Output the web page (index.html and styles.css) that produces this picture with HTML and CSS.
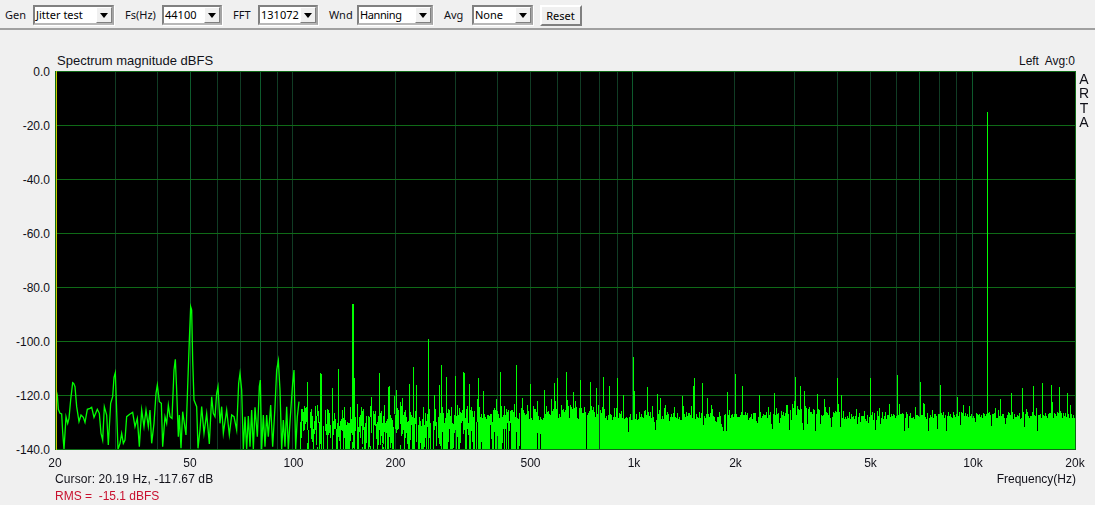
FILE: index.html
```html
<!DOCTYPE html>
<html lang="en">
<head>
<meta charset="utf-8">
<title>ARTA Spectrum</title>
<link rel="stylesheet" href="styles.css">
</head>
<body>
<header class="toolbar">
  <span class="tool-label tool-label-gen">Gen</span>
  <div class="combo combo-gen"><span class="combo-value">Jitter test</span><span class="combo-btn"><i class="arrow"></i></span></div>
  <span class="tool-label tool-label-fs">Fs(Hz)</span>
  <div class="combo combo-fs"><span class="combo-value">44100</span><span class="combo-btn"><i class="arrow"></i></span></div>
  <span class="tool-label tool-label-fft">FFT</span>
  <div class="combo combo-fft"><span class="combo-value">131072</span><span class="combo-btn"><i class="arrow"></i></span></div>
  <span class="tool-label tool-label-wnd">Wnd</span>
  <div class="combo combo-wnd"><span class="combo-value">Hanning</span><span class="combo-btn"><i class="arrow"></i></span></div>
  <span class="tool-label tool-label-avg">Avg</span>
  <div class="combo combo-avg"><span class="combo-value">None</span><span class="combo-btn"><i class="arrow"></i></span></div>
  <button class="reset" type="button">Reset</button>
</header>
<main class="chart">
  <div class="chart-head">
    <span class="chart-title">Spectrum magnitude dBFS</span>
    <span class="chart-status">Left&nbsp; Avg:0</span>
  </div>
  <div class="y-axis">
    <span class="y-tick">0.0</span>
    <span class="y-tick">-20.0</span>
    <span class="y-tick">-40.0</span>
    <span class="y-tick">-60.0</span>
    <span class="y-tick">-80.0</span>
    <span class="y-tick">-100.0</span>
    <span class="y-tick">-120.0</span>
    <span class="y-tick">-140.0</span>
  </div>
  <canvas class="plot" id="plot" width="1021" height="379"></canvas>
  <div class="brand"><span>A</span><span>R</span><span>T</span><span>A</span></div>
  <div class="x-axis">
    <span class="x-tick" style="left:0px">20</span>
    <span class="x-tick" style="left:135px">50</span>
    <span class="x-tick" style="left:238.5px">100</span>
    <span class="x-tick" style="left:340.5px">200</span>
    <span class="x-tick" style="left:475.5px">500</span>
    <span class="x-tick" style="left:579px">1k</span>
    <span class="x-tick" style="left:680.5px">2k</span>
    <span class="x-tick" style="left:815.5px">5k</span>
    <span class="x-tick" style="left:918px">10k</span>
    <span class="x-tick" style="left:1020px">20k</span>
  </div>
  <div class="readout">
    <span class="cursor">Cursor: 20.19 Hz, -117.67 dB</span>
    <span class="freq-label">Frequency(Hz)</span>
    <span class="rms">RMS =&nbsp; -15.1 dBFS</span>
  </div>
</main>
<script src="script.js"></script>
</body>
</html>
```

FILE: styles.css
```css
* { box-sizing: border-box; }
html, body { margin: 0; height: 505px; overflow: hidden; }
body {
  background: #f0f0f0;
  color: #101018;
  font-family: "Liberation Sans", Arial, sans-serif;
  font-size: 12px;
}

.toolbar {
  display: flex;
  align-items: flex-start;
  height: 30px;
  padding: 5px 0 0 5px;
  border-bottom: 2px solid #a0a0a0;
  font-family: "Noto Sans", sans-serif;
  font-size: 11px;
}
.tool-label { height: 20px; line-height: 20px; }
.tool-label-gen { width: 28px; }
.tool-label-fs { width: 37px; margin-left: 11px; }
.tool-label-fft { width: 25px; margin-left: 11px; }
.tool-label-wnd { width: 28px; margin-left: 11px; }
.tool-label-avg { width: 28px; margin-left: 11px; }

.combo {
  display: flex;
  height: 20px;
  background: #fff;
  border: 2px solid;
  border-color: #808080 #a4a4a4 #b8b8b8 #808080;
  box-shadow: 1px 1px 0 #fff;
}
.combo-gen { width: 81px; }
.combo-fs { width: 60px; }
.combo-fft { width: 60px; }
.combo-wnd { width: 76px; }
.combo-avg { width: 61px; }
.combo-value { flex: 1; padding-left: 1px; line-height: 16px; color: #000; white-space: nowrap; }
.combo-wnd .combo-value { letter-spacing: -0.4px; }
.combo-btn {
  display: flex;
  align-items: center;
  justify-content: center;
  width: 16px;
  background: #f0f0f0;
  border: 1px solid;
  border-color: #fff #808080 #808080 #fff;
}
.arrow {
  width: 0;
  height: 0;
  border-left: 4.5px solid transparent;
  border-right: 4.5px solid transparent;
  border-top: 5px solid #000;
}
.reset {
  width: 42px;
  height: 21px;
  margin-left: 7px;
  padding: 0 1px 0 0;
  background: #f0f0f0;
  border: 2px solid;
  border-color: #fff #808080 #808080 #fff;
  font: inherit;
  color: #000;
}

.chart {
  display: grid;
  grid-template-columns: 55px 1021px 19px;
  grid-template-rows: 41px 379px 21px 34px;
}
.chart-head {
  grid-column: 2;
  grid-row: 1;
  display: flex;
  justify-content: space-between;
  align-items: flex-end;
  padding: 0 1px 2px 2px;
}
.chart-title { font-size: 13px; line-height: 16px; }
.chart-status { line-height: 16px; letter-spacing: -0.05px; }

.y-axis {
  grid-column: 1;
  grid-row: 2;
  display: flex;
  flex-direction: column;
  justify-content: space-between;
  align-items: flex-end;
  padding: 1px 5px 0 0;
}
.y-tick { height: 0; line-height: 0; }

.plot { grid-column: 2; grid-row: 2; display: block; width: 1021px; height: 379px; }

.brand {
  grid-column: 3;
  grid-row: 2;
  display: flex;
  flex-direction: column;
  align-items: center;
  padding: 1px 3px 0 0;
  font-size: 14px;
  line-height: 14.4px;
}

.x-axis { grid-column: 2; grid-row: 3; position: relative; }
.x-tick {
  position: absolute;
  top: 6px;
  transform: translateX(-50%);
  line-height: 14px;
}

.readout {
  grid-column: 1 / span 2;
  grid-row: 4;
  display: grid;
  grid-template-columns: 1fr auto;
  grid-auto-rows: 17px;
  padding-left: 55px;
  line-height: 17px;
}
.cursor { letter-spacing: 0.11px; }
.rms { color: #c8102e; grid-column: 1 / span 2; }
```

FILE: script.js
```js
(function () {
  var W = 1021, H = 379, OX = 55, OY = 71;
  var ctx = document.getElementById('plot').getContext('2d');
  var seed = 2024;
  function rnd() { seed = (seed * 1664525 + 1013904223) >>> 0; return seed / 4294967296; }

  ctx.fillStyle = '#000';
  ctx.fillRect(0, 0, W, H);

  // vertical log-frequency grid
  var decades = [20, 30, 40, 50, 60, 70, 80, 90, 100, 200, 300, 400, 500, 600, 700, 800, 900, 1000,
    2000, 3000, 4000, 5000, 6000, 7000, 8000, 9000, 10000];
  var bright = { 50: 1, 80: 1, 1000: 1, 7000: 1, 10000: 1 };
  decades.forEach(function (f) {
    var x = Math.round(1 + 339.7 * Math.log10(f / 20)) - 1;
    ctx.fillStyle = bright[f] ? '#0d5a2c' : '#103c24';
    ctx.fillRect(x, 0, 1, H);
  });

  // horizontal dB grid
  ctx.fillStyle = '#0f6a17';
  for (var i = 1; i < 7; i++) ctx.fillRect(0, i * 54, W, 1);

  // low-frequency trace, sampled as (x*3, (y-290)*3) screen positions
  var trace = [168,300,172,315,175,358,180,370,185,372,188,425,192,478,195,430,198,380,203,400,207,385,212,330,218,278,221,280,225,290,230,350,237,395,243,375,250,382,255,397,262,358,270,355,275,352,282,382,292,358,298,370,303,430,308,450,313,350,320,375,325,465,332,340,338,320,342,262,346,248,349,335,354,478,360,460,365,430,370,460,375,450,380,380,390,372,398,367,405,410,412,385,418,470,425,360,432,410,438,360,445,410,450,360,455,460,462,400,468,310,472,285,478,335,484,340,488,470,495,380,500,400,505,345,510,380,516,385,522,240,526,208,530,300,535,440,538,375,543,475,548,365,553,400,558,435,563,290,568,150,572,50,575,60,578,210,582,330,590,350,594,475,600,420,605,350,612,430,620,370,628,462,635,320,640,370,645,380,650,310,654,290,660,400,665,350,670,430,680,360,688,435,695,375,702,380,710,420,716,280,720,250,725,300,730,478,735,380,740,478,745,378,750,470,755,360,760,478,765,352,772,440,778,290,781,270,785,478,790,375,795,470,800,375,805,440,812,345,818,470,825,350,830,240,835,212,840,300,845,478,850,390,855,470,860,350,865,478,870,395,878,280,882,240,887,478,892,380,897,335];
  ctx.strokeStyle = '#00ff00';
  ctx.lineWidth = 1.3;
  ctx.beginPath();
  for (var t = 0; t < trace.length; t += 2) {
    var tx = trace[t] / 3 - OX, ty = trace[t + 1] / 3 + 290 - OY;
    if (t === 0) ctx.moveTo(tx, ty); else ctx.lineTo(tx, ty);
  }
  ctx.stroke();

  // noise floor, one column per pixel: sparse strands thickening into a solid fill
  ctx.fillStyle = '#00ff00';
  function column(sx, top, bottom) {
    ctx.fillRect(sx - OX, Math.round(top) - OY, 1, Math.max(1, Math.round(bottom - top)));
  }
  for (var sx = 299; sx < 1075; sx++) {
    if (sx < 600) {
      var p = Math.min(1, (sx - 299) / 270);
      if (rnd() < 0.16 - 0.12 * p) continue; // black gap through the whole band
      var top = 405 + 26 * rnd() * (1 - 0.45 * p);
      if (rnd() < 0.12) top -= 3 + rnd() * 8;
      var solid = rnd() < 0.08 + 0.92 * Math.pow(p, 1.6);
      var bottom = solid ? 450 : top + 10 + rnd() * 24;
      column(sx, top, Math.min(bottom, 450));
      if (rnd() < 0.2 * (1 - p)) column(sx, 440 + rnd() * 8, 450);
    } else {
      var bump = 5 * Math.exp(-Math.pow((sx - 805) / 28, 2));
      var noisy = sx < 900 ? 1 : 0.55;
      var ttop = 412 - bump + rnd() * (5 + 3 * noisy);
      var roll = rnd();
      if (roll < 0.2 * noisy) ttop -= 2 + rnd() * 9;
      else if (roll < 0.2 * noisy + 0.12 * noisy) ttop = 419 + rnd() * 13;
      column(sx, ttop, 450);
    }
  }

  // discrete spikes [x, top y]
  var spikes = [[307,382],[320,373],[321,374],[332,388],[338,369],[352,304],[353,304],[354,378],[371,397],[379,373],[388,387],[389,386],[396,390],[402,398],[409,384],[413,367],[416,385],[428,339],[434,395],[439,385],[441,365],[446,377],[455,376],[463,372],[464,373],[469,384],[478,378],[483,391],[500,372],[516,365],[522,398],[530,384],[544,390],[554,383],[557,378],[566,372],[573,392],[580,380],[590,382],[596,388],[603,377],[609,386],[617,378],[623,395],[633,357],[634,391],[647,387],[657,394],[660,398],[682,396],[693,386],[694,378],[702,383],[707,398],[727,392],[735,374],[742,386],[759,395],[774,393],[795,377],[800,386],[804,391],[817,394],[837,378],[841,395],[870,378],[897,375],[920,382],[923,403],[924,404],[940,385],[957,397],[987,112],[1000,399],[1011,393],[1022,388],[1033,386],[1042,383],[1051,385],[1059,387],[1067,393]];
  spikes.forEach(function (s) {
    ctx.fillRect(s[0] - OX, s[1] - OY, 1, 430 - s[1]);
  });

  // frame
  ctx.fillStyle = '#0f6a17';
  ctx.fillRect(0, 0, W, 1);
  ctx.fillRect(0, H - 1, W, 1);
  ctx.fillRect(W - 1, 0, 1, H);
  ctx.fillRect(0, 0, 1, H);
  ctx.fillStyle = '#c8c800';
  ctx.fillRect(1, 0, 1, H);
})();
```
